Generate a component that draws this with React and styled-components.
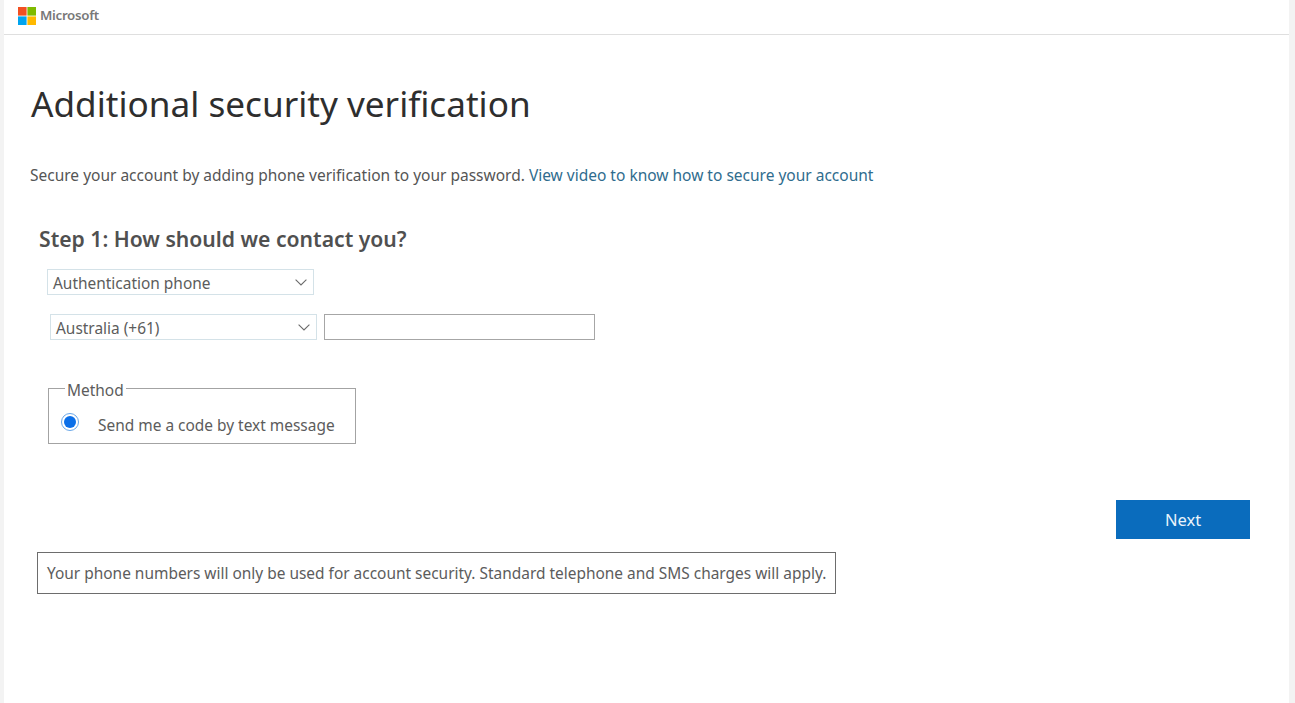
import React from 'react';
import styled, { createGlobalStyle } from 'styled-components';

const GlobalStyle = createGlobalStyle`
  html, body {
    margin: 0;
    padding: 0;
    height: 100%;
    background: #f3f3f3;
    overflow: hidden;
  }
  body {
    font-family: "Noto Sans", "Open Sans", "Liberation Sans", sans-serif;
  }
`;

const Page = styled.div`
  width: 1285px;
  height: 703px;
  margin-left: 4px;
  background: #fff;
  box-sizing: border-box;
`;

const Header = styled.header`
  height: 35px;
  box-sizing: border-box;
  border-bottom: 1px solid #dfdfdf;
  display: flex;
  align-items: flex-start;
  gap: 4px;
  padding: 7px 0 0 14px;
`;

const LogoGrid = styled.svg`
  width: 18px;
  height: 18px;
  flex: none;
`;

const Brand = styled.span`
  font-size: 13.3px;
  line-height: 17px;
  font-weight: 600;
  color: #787878;
  letter-spacing: -0.3px;
`;

const Main = styled.main`
  padding: 45px 0 0 27px;
`;

const Title = styled.h1`
  margin: 0;
  font-size: 35.15px;
  line-height: 46px;
  font-weight: 400;
  color: #2e2e2e;
`;

const Intro = styled.p`
  margin: 38px 0 0 -1px;
  font-size: 15.5px;
  line-height: 22px;
  color: #555;
`;

const VideoLink = styled.a`
  color: #2f6c8e;
  text-decoration: none;
`;

const Step = styled.h2`
  margin: 39px 0 0 8px;
  font-size: 21.15px;
  line-height: 28px;
  font-weight: 600;
  color: #505050;
`;

const Row = styled.div`
  display: flex;
  gap: 7px;
  margin-top: ${p => p.$top}px;
  margin-left: ${p => p.$left}px;
`;

const Select = styled.div`
  width: 267px;
  height: 26px;
  box-sizing: border-box;
  border: 1px solid #d4e2e8;
  padding: 1px 6px 0 5px;
  display: flex;
  align-items: center;
  justify-content: space-between;
  font-size: 15.45px;
  color: #5c5c5c;
  background: #fff;
`;

const Chevron = styled.svg`
  width: 12px;
  height: 7px;
  flex: none;
`;

const PhoneInput = styled.input`
  width: 271px;
  height: 26px;
  box-sizing: border-box;
  border: 1px solid #a6a6a6;
  background: #fff;
  outline: none;
  padding: 0 6px;
`;

const Method = styled.fieldset`
  width: 308px;
  height: 68px;
  box-sizing: border-box;
  margin: 36px 0 0 17px;
  padding: 0 0 0 12px;
  border: 1px solid #a3a3a3;
  display: flex;
  align-items: center;
  gap: 19px;
`;

const Legend = styled.legend`
  padding: 4px 2px 0;
  margin-left: 4px;
  font-size: 15.45px;
  line-height: 20px;
  color: #5c5c5c;
`;

const RadioMark = styled.span`
  width: 18px;
  height: 18px;
  box-sizing: border-box;
  flex: none;
  border-radius: 50%;
  border: 1px solid #6aa7e8;
  background: #fff;
  display: flex;
  align-items: center;
  justify-content: center;
  margin-top: 1px;

  &::after {
    content: '';
    width: 12px;
    height: 12px;
    border-radius: 50%;
    background: #0b6fe8;
  }
`;

const RadioLabel = styled.span`
  font-size: 15.45px;
  line-height: 20px;
  color: #5c5c5c;
  margin-top: 6px;
`;

const Actions = styled.div`
  display: flex;
  justify-content: flex-end;
  margin-top: 56px;
  padding-right: 39px;
`;

const NextButton = styled.button`
  width: 134px;
  height: 39px;
  border: none;
  background: #0a6cbd;
  color: #e9f3fb;
  font-family: inherit;
  font-size: 16.5px;
`;

const Notice = styled.div`
  width: 799px;
  height: 42px;
  box-sizing: border-box;
  margin: 13px 0 0 6px;
  border: 1px solid #6d6d6d;
  padding: 0 9px;
  display: flex;
  align-items: center;
  font-size: 15.44px;
  color: #5c5c5c;
  white-space: nowrap;
`;

const ChevronIcon = () => (
  <Chevron viewBox="0 0 12 7" fill="none" stroke="#6b6b6b" strokeWidth="1.1">
    <path d="M0.6 0.6 L6 6 L11.4 0.6" />
  </Chevron>
);

const App = () => (
  <>
    <GlobalStyle />
    <Page>
      <Header>
        <LogoGrid viewBox="0 0 18 18" aria-label="Microsoft logo">
          <rect x="0" y="0" width="8.6" height="8.6" fill="#f25022" />
          <rect x="9.4" y="0" width="8.6" height="8.6" fill="#7fba00" />
          <rect x="0" y="9.4" width="8.6" height="8.6" fill="#00a4ef" />
          <rect x="9.4" y="9.4" width="8.6" height="8.6" fill="#ffb900" />
        </LogoGrid>
        <Brand>Microsoft</Brand>
      </Header>
      <Main>
        <Title>Additional security verification</Title>
        <Intro>
          Secure your account by adding phone verification to your password.{' '}
          <VideoLink href="#">View video to know how to secure your account</VideoLink>
        </Intro>
        <Step>Step 1: How should we contact you?</Step>
        <Row $top={16} $left={16}>
          <Select>
            Authentication phone
            <ChevronIcon />
          </Select>
        </Row>
        <Row $top={19} $left={19}>
          <Select>
            Australia (+61)
            <ChevronIcon />
          </Select>
          <PhoneInput type="text" />
        </Row>
        <Method>
          <Legend>Method</Legend>
          <RadioMark />
          <RadioLabel>Send me a code by text message</RadioLabel>
        </Method>
        <Actions>
          <NextButton>Next</NextButton>
        </Actions>
        <Notice>
          Your phone numbers will only be used for account security. Standard telephone and SMS charges will apply.
        </Notice>
      </Main>
    </Page>
  </>
);

export default App;
